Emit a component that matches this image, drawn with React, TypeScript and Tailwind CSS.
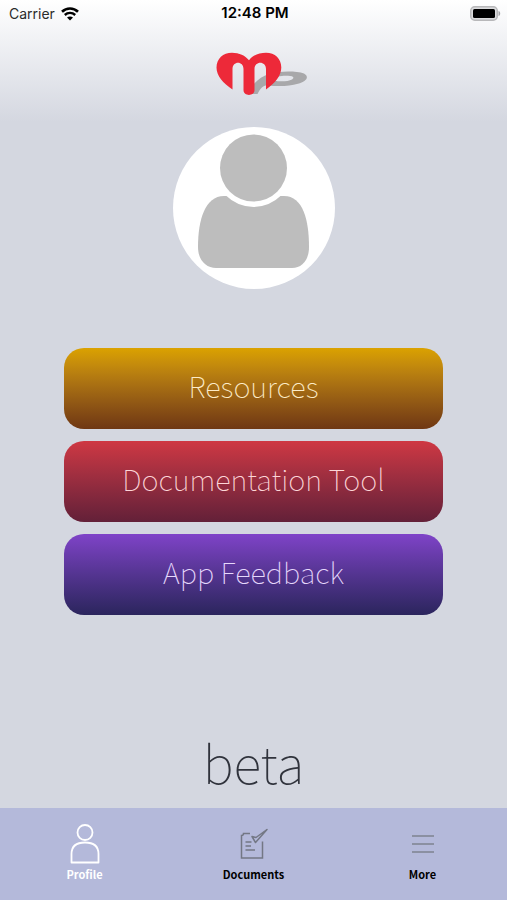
import type { ReactNode } from "react";

interface MenuAction {
  label: string;
  gradient: string;
}

interface Tab {
  label: string;
  icon: ReactNode;
  active?: boolean;
}

const ACTIONS: MenuAction[] = [
  { label: "Resources", gradient: "from-[#dba200] to-[#6f3713] text-[#fdecc8]" },
  { label: "Documentation Tool", gradient: "from-[#cf3843] to-[#632038] text-[#fdd6d8]" },
  { label: "App Feedback", gradient: "from-[#7f43c8] to-[#2b255d] text-[#e6d8fc]" },
];

const TABS: Tab[] = [
  { label: "Profile", icon: <ProfileIcon />, active: true },
  { label: "Documents", icon: <DocumentsIcon /> },
  { label: "More", icon: <MoreIcon /> },
];

function WifiIcon() {
  return (
    <svg width="18" height="14" viewBox="0 0 18 14" fill="none" aria-hidden="true">
      <path d="M1 4.8C5.5 0.4 12.5 0.4 17 4.8" stroke="#000" strokeWidth="2.6" />
      <path d="M3.8 8C6.8 5.2 11.2 5.2 14.2 8" stroke="#000" strokeWidth="2.4" />
      <path d="M6 10.6C7.8 9 10.2 9 12 10.6L9 13.6Z" fill="#000" />
    </svg>
  );
}

function BatteryIcon() {
  return (
    <svg width="31" height="15" viewBox="0 0 31 15" aria-hidden="true">
      <rect x="0.75" y="0.75" width="26.5" height="13.5" rx="4" fill="#dcdcde" stroke="#b8b8ba" strokeWidth="1.5" />
      <rect x="3" y="3" width="22" height="9" rx="1.5" fill="#000" />
      <path d="M28.5 5C30.8 5.6 30.8 9.4 28.5 10Z" fill="#a5a5a8" />
    </svg>
  );
}

function Logo() {
  return (
    <svg width="92" height="44" viewBox="0 0 92 44" role="img" aria-label="Logo">
      <path
        fillRule="evenodd"
        d="M36 42V34C40 29 46 24 54 21.5C64 19 80 18.8 88 21.5C94 25 90 29.5 82 31.8C73 34.3 62 34.8 51 33.2C47 33.2 44 37 41.5 42ZM58 28.5C64 30 72 29.5 76 27.5C79 25.5 77 24 72 23.8C66 23.5 59 24.5 56 26.5Z"
        fill="#a8a8aa"
      />
      <path
        d="M16.5 37.5C7 31 0.5 24 0.5 15.5C0.5 6.5 7 0.7 16 0.7C23 0.7 29.5 3.5 33 8.3C36.5 3.5 43 0.7 50 0.7C59 0.7 65.3 6.5 65.3 15.5C65.3 24 59 31 50 37.5V17C50 8.5 38.5 8.5 38.5 17V38C38.5 44.5 27.5 44.5 27.5 38V17C27.5 8.5 16.5 8.5 16.5 17Z"
        fill="#ed2939"
      />
    </svg>
  );
}

function Avatar() {
  return (
    <svg className="size-[162px]" viewBox="0 0 162 162" role="img" aria-label="Profile picture">
      <circle cx="81" cy="81" r="81" fill="#fff" />
      <path
        d="M25 120C25 93 32 69 51 69H111C130 69 136 93 136 120C136 133 129 141 119 141H43C33 141 25 133 25 120Z"
        fill="#bdbdbd"
      />
      <circle cx="80.5" cy="41" r="39" fill="#fff" />
      <circle cx="80.5" cy="41" r="33.5" fill="#bdbdbd" />
    </svg>
  );
}

function ProfileIcon() {
  return (
    <svg width="30" height="40" viewBox="0 0 30 40" fill="none" stroke="#fff" strokeWidth="1.8" aria-hidden="true">
      <circle cx="15" cy="8.5" r="7.5" />
      <path d="M1.5 38.5V30C1.5 22.5 6 18.5 15 18.5S28.5 22.5 28.5 30V38.5Z" strokeLinejoin="round" />
    </svg>
  );
}

function DocumentsIcon() {
  return (
    <svg width="28" height="32" viewBox="0 0 28 32" fill="none" stroke="#737784" strokeWidth="1.5" aria-hidden="true">
      <path d="M10 5.5H3.5C3.5 7 2.5 7.5 1.5 7.5V30H22.5V13.5" />
      <path d="M12 8.5L15.5 14.5L27 1.5L16 9.5Z" strokeLinejoin="round" />
      <path d="M5.5 14H11.5M5.5 18H11M5.5 22H15" />
    </svg>
  );
}

function MoreIcon() {
  return (
    <svg width="22" height="18" viewBox="0 0 22 18" stroke="#7e8290" strokeWidth="1.5" aria-hidden="true">
      <path d="M0 1H22M0 9H22M0 17H22" />
    </svg>
  );
}

function StatusBar() {
  return (
    <div className="grid grid-cols-3 items-center h-[27px] pl-[9px] pr-1.5 font-['Inter',sans-serif] text-black">
      <div className="flex items-center gap-1.5 text-[14px] text-[#2b2b2b]">
        <span>Carrier</span>
        <WifiIcon />
      </div>
      <span className="text-center text-[15px] font-semibold">12:48 PM</span>
      <div className="flex justify-end">
        <BatteryIcon />
      </div>
    </div>
  );
}

export default function App() {
  return (
    <div className="min-h-screen flex flex-col bg-[#d4d7e0] font-['Noto_Sans_CJK_JP','Noto_Sans',sans-serif]">
      <header className="h-[122px] bg-linear-to-b from-white to-[#d4d7e0]">
        <StatusBar />
        <div className="flex justify-center mt-[25px] pl-4">
          <Logo />
        </div>
      </header>

      <main className="flex-1 flex flex-col items-center px-16 pt-[5px]">
        <Avatar />
        <div className="w-full flex flex-col gap-3 mt-[59px]">
          {ACTIONS.map((action) => (
            <button
              key={action.label}
              type="button"
              className={`h-[81px] w-full rounded-[20px] bg-linear-to-b pb-2 text-[29px] leading-10 font-thin cursor-pointer ${action.gradient}`}
            >
              {action.label}
            </button>
          ))}
        </div>
        <p className="mt-auto pb-2.5 text-[52px] leading-[72px] font-thin text-[#30333c]">beta</p>
      </main>

      <nav className="h-[92px] bg-[#b4b9da] grid grid-cols-3">
        {TABS.map((tab) => (
          <a
            key={tab.label}
            href="#"
            aria-current={tab.active ? "page" : undefined}
            className={`flex flex-col items-center pt-4 text-[11px] leading-4 font-bold ${tab.active ? "text-white" : "text-black"}`}
          >
            <span className="h-10 flex items-center">{tab.icon}</span>
            <span className="mt-0.5">{tab.label}</span>
          </a>
        ))}
      </nav>
    </div>
  );
}
